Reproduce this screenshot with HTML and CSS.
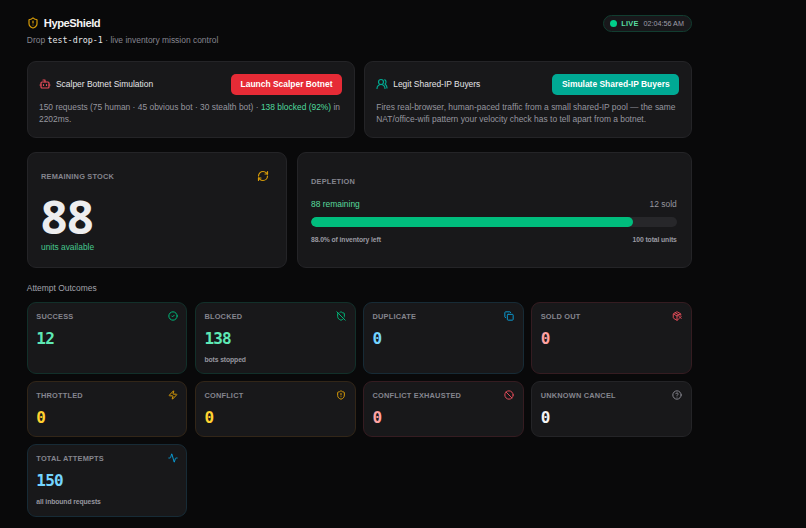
FILE: index.html
```html
<!DOCTYPE html>
<html lang="en">
<head>
    <meta charset="UTF-8">
    <meta name="viewport" content="width=device-width, initial-scale=1.0">
    <title>HypeShield</title>
    <link rel="stylesheet" href="styles.css">
</head>
<body>
    <main class="dashboard">
        <header class="header">
            <div>
                <h1>
                    <svg class="icon amber" viewBox="0 0 24 24"><path d="M20 13c0 5-3.5 7.5-7.66 8.95a1 1 0 0 1-.67-.01C7.5 20.5 4 18 4 13V6a1 1 0 0 1 1-1c2 0 4.5-1.2 6.24-2.72a1.17 1.17 0 0 1 1.52 0C14.51 3.81 17 5 19 5a1 1 0 0 1 1 1z"/><path d="M12 8v4M12 16h.01"/></svg>
                    <span>HypeShield</span>
                </h1>
                <p class="subtitle">Drop <code>test-drop-1</code> · live inventory mission control</p>
            </div>
            <div class="live-pill">
                <span class="live-dot"></span>
                <span class="live-label">LIVE</span>
                <span class="live-time">02:04:56 AM</span>
            </div>
        </header>

        <section class="simulations">
            <div class="card simulation">
                <div class="simulation-head">
                    <svg class="icon red" viewBox="0 0 24 24"><path d="M12 8V4H8"/><rect width="16" height="12" x="4" y="8" rx="2"/><path d="M2 14h2M20 14h2M15 13v2M9 13v2"/></svg>
                    <h2>Scalper Botnet Simulation</h2>
                    <button class="button-red">Launch Scalper Botnet</button>
                </div>
                <p>150 requests (75 human · 45 obvious bot · 30 stealth bot) · <b>138 blocked (92%)</b> in<br>2202ms.</p>
            </div>
            <div class="card simulation">
                <div class="simulation-head">
                    <svg class="icon teal" viewBox="0 0 24 24"><path d="M18 21a8 8 0 0 0-16 0"/><circle cx="10" cy="8" r="5"/><path d="M22 20c0-3.37-2-6.5-4-8a5 5 0 0 0-.45-8.3"/></svg>
                    <h2>Legit Shared-IP Buyers</h2>
                    <button class="button-teal">Simulate Shared-IP Buyers</button>
                </div>
                <p>Fires real-browser, human-paced traffic from a small shared-IP pool — the same<br>NAT/office-wifi pattern your velocity check has to tell apart from a botnet.</p>
            </div>
        </section>

        <section class="inventory">
            <div class="card stock">
                <div class="stock-head">
                    <h3>REMAINING STOCK</h3>
                    <svg class="icon amber" viewBox="0 0 24 24"><path d="M3 12a9 9 0 0 1 9-9 9.75 9.75 0 0 1 6.74 2.74L21 8"/><path d="M21 3v5h-5M21 12a9 9 0 0 1-9 9 9.75 9.75 0 0 1-6.74-2.74L3 16"/><path d="M8 16H3v5"/></svg>
                </div>
                <div class="stock-count">88</div>
                <p class="stock-note">units available</p>
            </div>
            <div class="card depletion">
                <h3>DEPLETION</h3>
                <div class="row depletion-values">
                    <span class="remaining">88 remaining</span>
                    <span class="sold">12 sold</span>
                </div>
                <div class="bar"><div class="bar-fill" style="width: 88%"></div></div>
                <div class="row depletion-notes">
                    <span>88.0% of inventory left</span>
                    <span>100 total units</span>
                </div>
            </div>
        </section>

        <h2 class="section-title">Attempt Outcomes</h2>
        <section class="outcomes">
            <div class="card outcome outcome-green">
                <h3>SUCCESS</h3>
                <svg class="icon" viewBox="0 0 24 24"><circle cx="12" cy="12" r="10"/><path d="m9 12 2 2 4-4"/></svg>
                <strong>12</strong>
            </div>
            <div class="card outcome outcome-green">
                <h3>BLOCKED</h3>
                <svg class="icon" viewBox="0 0 24 24"><path d="m2 2 20 20M5 5a1 1 0 0 0-1 1v7c0 5 3.5 7.5 7.67 8.94a1 1 0 0 0 .67.01c2.35-.82 4.48-1.97 5.9-3.71M9.31 3.65A12.25 12.25 0 0 0 11.24 2.28a1.17 1.17 0 0 1 1.52 0C14.51 3.81 17 5 19 5a1 1 0 0 1 1 1v7a9.78 9.78 0 0 1-.08 1.26"/></svg>
                <strong>138</strong>
                <p>bots stopped</p>
            </div>
            <div class="card outcome outcome-blue">
                <h3>DUPLICATE</h3>
                <svg class="icon" viewBox="0 0 24 24"><rect width="14" height="14" x="8" y="8" rx="2"/><path d="M4 16c-1.1 0-2-.9-2-2V4c0-1.1.9-2 2-2h10c1.1 0 2 .9 2 2"/></svg>
                <strong>0</strong>
            </div>
            <div class="card outcome outcome-red">
                <h3>SOLD OUT</h3>
                <svg class="icon" viewBox="0 0 24 24"><path d="M21 10V8a2 2 0 0 0-1-1.73l-7-4a2 2 0 0 0-2 0l-7 4A2 2 0 0 0 3 8v8a2 2 0 0 0 1 1.73l7 4a2 2 0 0 0 2 0l2-1.14M7.5 4.27l9 5.15"/><path d="M3.29 7 12 12l8.71-5M12 22V12M17 13l5 5M22 13l-5 5"/></svg>
                <strong>0</strong>
            </div>
            <div class="card outcome outcome-amber">
                <h3>THROTTLED</h3>
                <svg class="icon" viewBox="0 0 24 24"><path d="M4 14a1 1 0 0 1-.78-1.63l9.9-10.2a.5.5 0 0 1 .86.46l-1.92 6.02A1 1 0 0 0 13 10h7a1 1 0 0 1 .78 1.63l-9.9 10.2a.5.5 0 0 1-.86-.46l1.92-6.02A1 1 0 0 0 11 14z"/></svg>
                <strong>0</strong>
            </div>
            <div class="card outcome outcome-amber">
                <h3>CONFLICT</h3>
                <svg class="icon" viewBox="0 0 24 24"><path d="M20 13c0 5-3.5 7.5-7.66 8.95a1 1 0 0 1-.67-.01C7.5 20.5 4 18 4 13V6a1 1 0 0 1 1-1c2 0 4.5-1.2 6.24-2.72a1.17 1.17 0 0 1 1.52 0C14.51 3.81 17 5 19 5a1 1 0 0 1 1 1z"/><path d="M12 8v4M12 16h.01"/></svg>
                <strong>0</strong>
            </div>
            <div class="card outcome outcome-red">
                <h3>CONFLICT EXHAUSTED</h3>
                <svg class="icon" viewBox="0 0 24 24"><circle cx="12" cy="12" r="10"/><path d="m4.9 4.9 14.2 14.2"/></svg>
                <strong>0</strong>
            </div>
            <div class="card outcome outcome-gray">
                <h3>UNKNOWN CANCEL</h3>
                <svg class="icon" viewBox="0 0 24 24"><circle cx="12" cy="12" r="10"/><path d="M9.09 9a3 3 0 0 1 5.83 1c0 2-3 3-3 3M12 17h.01"/></svg>
                <strong>0</strong>
            </div>
            <div class="card outcome outcome-blue">
                <h3>TOTAL ATTEMPTS</h3>
                <svg class="icon" viewBox="0 0 24 24"><path d="M22 12h-2.48a2 2 0 0 0-1.93 1.46l-2.35 8.36a.25.25 0 0 1-.48 0L9.24 2.18a.25.25 0 0 0-.48 0l-2.35 8.36A2 2 0 0 1 4.49 12H2"/></svg>
                <strong>150</strong>
                <p>all inbound requests</p>
            </div>
        </section>
    </main>
</body>
</html>
```
FILE: styles.css
```css
* {
    box-sizing: border-box;
}

body {
    margin: 0;
    background: #09090a;
    color: #f4f4f5;
    font-family: "Liberation Sans", Arial, sans-serif;
}

h1, h2, h3, p {
    margin: 0;
    white-space: nowrap;
}

.dashboard {
    width: 665px;
    margin-left: 26.8px;
    padding-top: 15px;
}

.icon {
    display: block;
    flex: none;
    width: 12px;
    height: 12px;
    fill: none;
    stroke: currentColor;
    stroke-width: 2.4;
    stroke-linecap: round;
    stroke-linejoin: round;
}

.amber { color: #d69b08; }
.red { color: #e64b59; }
.teal { color: #00a991; }

/* Header */
.header {
    display: flex;
    justify-content: space-between;
    align-items: flex-start;
    height: 46px;
}

h1 {
    display: flex;
    align-items: center;
    gap: 5px;
    height: 16px;
    font-size: 11.2px;
    letter-spacing: -0.45px;
}

.subtitle {
    margin-top: 3px;
    color: #85858e;
    font-size: 8.45px;
    line-height: 12px;
}

code {
    color: #e4e4e7;
    font-family: "DejaVu Sans Mono", monospace;
    font-size: 8.4px;
}

.live-pill {
    display: flex;
    align-items: center;
    width: 89px;
    height: 17px;
    padding-left: 6px;
    border: 1px solid #123d30;
    border-radius: 9px;
    background: #18181b;
}

.live-dot {
    width: 7px;
    height: 7px;
    border-radius: 50%;
    background: #00cf8a;
}

.live-label {
    margin-left: 4.5px;
    color: #58dfa2;
    font-size: 7.4px;
    font-weight: bold;
    letter-spacing: 0.2px;
}

.live-time {
    margin-left: 5px;
    color: #9f9fa9;
    font-size: 7.2px;
    white-space: nowrap;
}

/* Cards */
.card {
    border: 1px solid #242427;
    border-radius: 9px;
    background: #18181a;
}

.simulations {
    display: grid;
    grid-template-columns: 1fr 1fr;
    gap: 9.5px;
}

.simulation {
    height: 77px;
    padding: 11px 11.5px 0 11.2px;
}

.simulation-head {
    display: flex;
    align-items: center;
    height: 22px;
}

.simulation h2 {
    margin-left: 5px;
    color: #e4e4e7;
    font-size: 8.45px;
    font-weight: normal;
}

button {
    height: 21px;
    margin-left: auto;
    padding: 0;
    border: 0;
    border-radius: 5px;
    color: #fff;
    font: bold 8.45px "Liberation Sans", Arial, sans-serif;
    white-space: nowrap;
}

.button-red {
    width: 111px;
    background: #e62b36;
}

.button-teal {
    width: 127px;
    background: #00a994;
}

.simulation p {
    margin-top: 7px;
    color: #96969f;
    font-size: 8.43px;
    line-height: 11.5px;
}

.simulation b {
    color: #4fda9d;
    font-weight: normal;
}

/* Inventory */
.inventory {
    display: grid;
    grid-template-columns: 260.5px 1fr;
    gap: 9.5px;
    margin-top: 14px;
}

.inventory .card {
    height: 116px;
}

h3 {
    color: #85858e;
    font-size: 7.4px;
    line-height: 11px;
    font-weight: bold;
    letter-spacing: 0.2px;
}

.stock {
    padding: 17px 17px 0 13.2px;
}

.stock-head {
    display: flex;
    justify-content: space-between;
    align-items: center;
}

.stock-count {
    margin-top: 11px;
    color: #ededee;
    font: bold 46px/46px "Open Sans", sans-serif;
}

.stock-note {
    margin-top: 2px;
    color: #46c98f;
    font-size: 8.4px;
    line-height: 12px;
}

.depletion {
    padding: 23px 14px 0 13.2px;
}

.row {
    display: flex;
    justify-content: space-between;
}

.depletion-values {
    margin-top: 11px;
    font-size: 8.45px;
    line-height: 12px;
}

.remaining { color: #58d99d; }
.sold { color: #96969f; }

.bar {
    height: 10px;
    margin-top: 7px;
    overflow: hidden;
    border-radius: 5px;
    background: #27272a;
}

.bar-fill {
    height: 100%;
    border-radius: 5px;
    background: #00bd7d;
}

.depletion-notes {
    margin-top: 7px;
    color: #9a9aa2;
    font-size: 6.8px;
    font-weight: bold;
    line-height: 11px;
    letter-spacing: -0.1px;
}

/* Attempt outcomes */
.section-title {
    margin-top: 14px;
    color: #a1a1aa;
    font-size: 8.45px;
    font-weight: normal;
    line-height: 12px;
}

.outcomes {
    display: grid;
    grid-template-columns: repeat(4, 1fr);
    grid-template-rows: 72px 56px 73px;
    gap: 7px 7.5px;
    margin-top: 8px;
}

.outcome {
    display: grid;
    grid-template-columns: 1fr 10px;
    grid-template-rows: 11px 19px 11px;
    row-gap: 6.5px;
    padding: 8px 8.5px 0;
}

.outcome .icon {
    width: 10px;
    height: 10px;
}

.outcome strong {
    grid-column: 1 / 3;
    font: bold 16px/19px "DejaVu Sans Mono", monospace;
    letter-spacing: -0.8px;
}

.outcome p {
    grid-column: 1 / 3;
    color: #96969f;
    font-size: 6.8px;
    font-weight: bold;
    line-height: 11px;
    letter-spacing: -0.1px;
}

.outcome-green { border-color: #12302a; }
.outcome-green .icon { color: #00b879; }
.outcome-green strong { color: #5ee9b5; }
.outcome-blue { border-color: #172b36; }
.outcome-blue .icon { color: #0b98cf; }
.outcome-blue strong { color: #74d4ff; }
.outcome-red { border-color: #351c21; }
.outcome-red .icon { color: #df4b58; }
.outcome-red strong { color: #ffa2a2; }
.outcome-amber { border-color: #322618; }
.outcome-amber .icon { color: #d99c08; }
.outcome-amber strong { color: #ffd230; }
.outcome-gray .icon { color: #85858e; }
.outcome-gray strong { color: #f4f4f5; }
```
